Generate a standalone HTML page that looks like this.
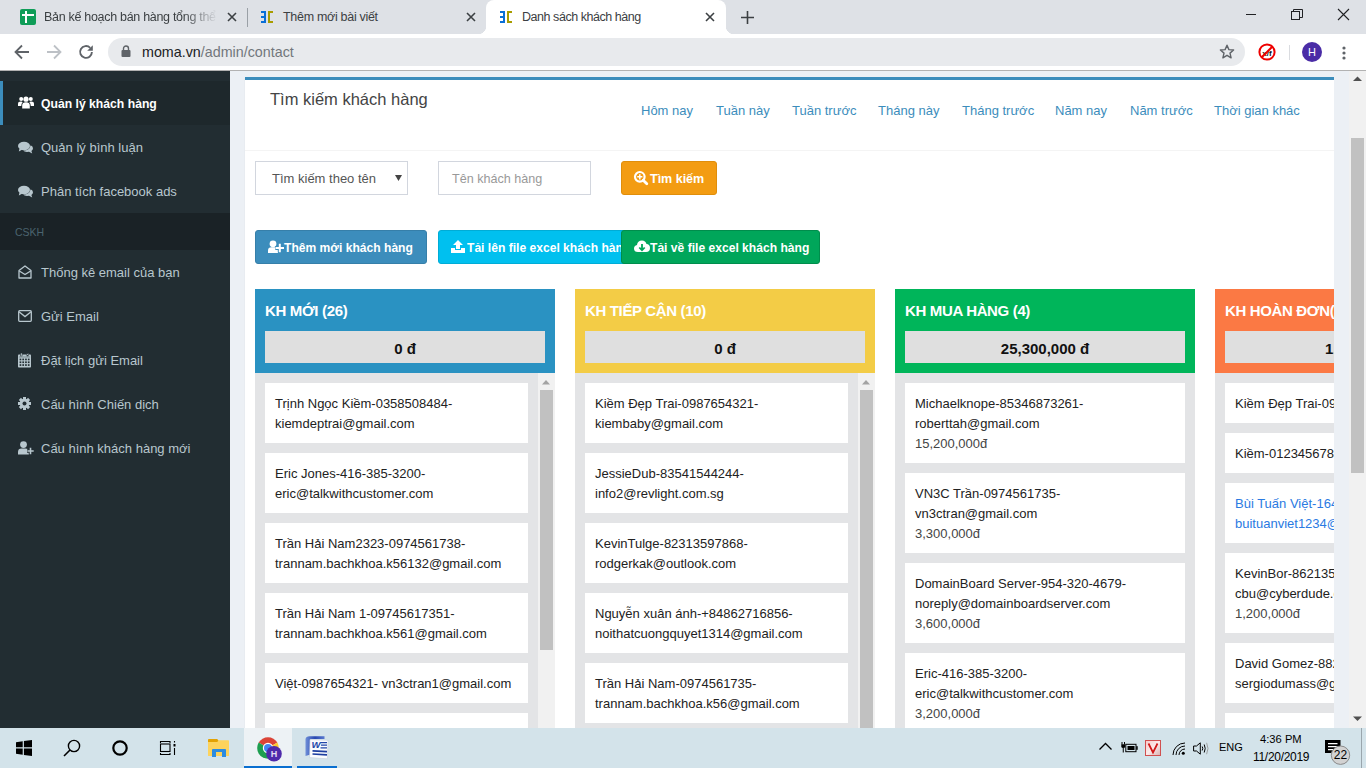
<!DOCTYPE html>
<html><head><meta charset="utf-8">
<style>
*{margin:0;padding:0;box-sizing:border-box}
html,body{width:1366px;height:768px;overflow:hidden;background:#ecf0f5;font-family:"Liberation Sans",sans-serif;position:relative}
.a{position:absolute;white-space:nowrap}
svg{position:absolute;overflow:visible}
/* chrome */
#tabs{left:0;top:0;width:1366px;height:34px;background:#dee1e6}
#toolbar{left:0;top:34px;width:1366px;height:36px;background:#fff}
#tline{left:0;top:70px;width:1366px;height:1px;background:#b2b2b2}
.tabt{font-size:12px;color:#3c4043;top:10px}
#omni{left:108px;top:38px;width:1137px;height:28px;border-radius:14px;background:#e8eaed}
/* sidebar */
#side{left:0;top:71px;width:230px;height:657px;background:#222d32}
.si{left:0;width:230px;height:44px}
.st{left:41px;font-size:13px;color:#b8c7ce;top:15px}
/* taskbar */
.lk{top:103px;font-size:13px;color:#3c8dbc}
.kt{top:13px;font-size:15px;letter-spacing:-0.35px;font-weight:bold;color:#fff}
.ktot{top:42px;width:280px;height:32px;background:#dfdfdf;text-align:center;font-size:15px;font-weight:bold;color:#111;line-height:35px}
.card{background:#fff;overflow:hidden}
.cl{left:10px;font-size:13px;color:#222;line-height:20px}
.pr{color:#444}
.bl{color:#2a7ae2}
#task{left:0;top:728px;width:1366px;height:40px;background:#d3e3ea}
</style></head><body>
<!-- ===== TAB STRIP ===== -->
<div class="a" id="tabs"></div>
<!-- tab1 -->
<svg style="left:20px;top:9px" width="16" height="16" viewBox="0 0 16 16"><rect x="0" y="0" width="16" height="16" rx="2" fill="#0f9d58"/><rect x="2" y="5" width="12" height="2" fill="#fff"/><rect x="5" y="2" width="2" height="12" fill="#fff"/></svg>
<div class="a tabt" style="left:44px;top:10px;font-size:12.5px;letter-spacing:-0.3px;width:174px;overflow:hidden;-webkit-mask-image:linear-gradient(90deg,#000 80%,transparent)">Bản kế hoạch bán hàng tổng thể</div>
<svg style="left:227px;top:12px" width="10" height="10" viewBox="0 0 10 10"><path d="M1 1L9 9M9 1L1 9" stroke="#3c4043" stroke-width="1.6"/></svg>
<div class="a" style="left:247px;top:8px;width:1px;height:19px;background:#9aa0a6"></div>
<!-- tab2 -->
<svg style="left:260px;top:9px" width="14" height="15" viewBox="0 0 14 15"><path d="M1 3H5V13H1M1 8H4" stroke="#0a6fd6" stroke-width="2" fill="none"/><path d="M13 3H9V13H13" stroke="#a89c00" stroke-width="2" fill="none"/></svg>
<div class="a tabt" style="left:283px;top:10px;font-size:12.5px;letter-spacing:-0.3px">Thêm mới bài viết</div>
<svg style="left:466px;top:12px" width="10" height="10" viewBox="0 0 10 10"><path d="M1 1L9 9M9 1L1 9" stroke="#3c4043" stroke-width="1.6"/></svg>
<!-- active tab -->
<div class="a" style="left:486px;top:0;width:240px;height:35px;background:#fff;border-radius:8px 8px 0 0"></div>
<div class="a" style="left:478px;top:26px;width:8px;height:8px;background:radial-gradient(circle at 0 0,transparent 8px,#fff 8.5px)"></div>
<div class="a" style="left:726px;top:26px;width:8px;height:8px;background:radial-gradient(circle at 100% 0,transparent 8px,#fff 8.5px)"></div>
<svg style="left:499px;top:9px" width="14" height="15" viewBox="0 0 14 15"><path d="M1 3H5V13H1M1 8H4" stroke="#0a6fd6" stroke-width="2" fill="none"/><path d="M13 3H9V13H13" stroke="#a89c00" stroke-width="2" fill="none"/></svg>
<div class="a tabt" style="left:522px;top:10px;font-size:12.5px;letter-spacing:-0.45px">Danh sách khách hàng</div>
<svg style="left:705px;top:12px" width="10" height="10" viewBox="0 0 10 10"><path d="M1 1L9 9M9 1L1 9" stroke="#3c4043" stroke-width="1.6"/></svg>
<svg style="left:741px;top:11px" width="13" height="13" viewBox="0 0 13 13"><path d="M6.5 0V13M0 6.5H13" stroke="#3c4043" stroke-width="1.6"/></svg>
<!-- window controls -->
<svg style="left:1246px;top:14px" width="11" height="2" viewBox="0 0 11 2"><path d="M0 .5H10" stroke="#202124" stroke-width="1"/></svg>
<svg style="left:1291px;top:9px" width="12" height="11" viewBox="0 0 12 11"><rect x=".5" y="2.5" width="8" height="8" fill="none" stroke="#202124"/><path d="M2.5 2.5V.5H11.5V8.5H8.5" fill="none" stroke="#202124"/></svg>
<svg style="left:1338px;top:9px" width="11" height="11" viewBox="0 0 11 11"><path d="M0 0L11 11M11 0L0 11" stroke="#202124" stroke-width="1.1"/></svg>

<!-- ===== TOOLBAR ===== -->
<div class="a" id="toolbar"></div>
<div class="a" id="tline"></div>
<svg style="left:14px;top:44px" width="16" height="16" viewBox="0 0 16 16"><path d="M15 8H2M8 1.5L1.5 8L8 14.5" stroke="#5f6368" stroke-width="1.8" fill="none"/></svg>
<svg style="left:46px;top:44px" width="16" height="16" viewBox="0 0 16 16"><path d="M1 8H14M8 1.5L14.5 8L8 14.5" stroke="#bdc1c6" stroke-width="1.8" fill="none"/></svg>
<svg style="left:78px;top:44px" width="16" height="16" viewBox="0 0 16 16"><path d="M13.9 8A5.9 5.9 0 1 1 12.2 3.8" stroke="#5f6368" stroke-width="1.9" fill="none"/><path d="M14.8 1.2V6.8H9.2Z" fill="#5f6368"/></svg>
<div class="a" id="omni"></div>
<svg style="left:121px;top:45px" width="10" height="12" viewBox="0 0 10 12"><path d="M2.5 5V3.5A2.5 2.5 0 0 1 7.5 3.5V5" stroke="#5f6368" stroke-width="1.4" fill="none"/><rect x="0.5" y="5" width="9" height="7" rx="1" fill="#5f6368"/></svg>
<div class="a" style="left:142px;top:44px;font-size:14.3px;color:#202124">moma.vn<span style="color:#72777c">/admin/contact</span></div>
<svg style="left:1219px;top:44px" width="16" height="16" viewBox="0 0 16 16"><path d="M8 1.2L9.9 5.6L14.6 6L11 9.1L12.1 13.8L8 11.3L3.9 13.8L5 9.1L1.4 6L6.1 5.6Z" stroke="#5f6368" stroke-width="1.4" fill="none" stroke-linejoin="round"/></svg>
<svg style="left:1258px;top:43px" width="18" height="18" viewBox="0 0 18 18"><circle cx="9" cy="9" r="7.6" stroke="#e00" stroke-width="2" fill="#fff"/><text x="9" y="12.5" font-size="8" font-family="Liberation Sans" font-weight="bold" text-anchor="middle" fill="#111">x/f</text><path d="M3.8 14.2L14.2 3.8" stroke="#e00" stroke-width="2"/></svg>
<div class="a" style="left:1289px;top:45px;width:1px;height:15px;background:#dadce0"></div>
<svg style="left:1302px;top:42px" width="20" height="20" viewBox="0 0 20 20"><circle cx="10" cy="10" r="10" fill="#4a2ca6"/><text x="10" y="14.2" font-size="11" font-family="Liberation Sans" text-anchor="middle" fill="#fff">H</text></svg>
<svg style="left:1342px;top:46px" width="4" height="14" viewBox="0 0 4 14"><circle cx="2" cy="2" r="1.6" fill="#5f6368"/><circle cx="2" cy="7" r="1.6" fill="#5f6368"/><circle cx="2" cy="12" r="1.6" fill="#5f6368"/></svg>

<!-- ===== SIDEBAR ===== -->
<div class="a" id="side"></div>
<div class="a" style="left:0;top:81px;width:230px;height:44px;background:#1e282c"></div>
<div class="a" style="left:0;top:81px;width:3px;height:44px;background:#3c8dbc"></div>
<div class="a" style="left:0;top:213px;width:230px;height:37px;background:#1a2226"></div>
<div class="a" style="left:15px;top:226px;font-size:10.5px;color:#4b646f">CSKH</div>
<!-- icons -->
<svg style="left:18px;top:96px" width="16" height="13" viewBox="0 0 16 13"><circle cx="8" cy="3.2" r="2.6" fill="#fff"/><circle cx="3.2" cy="3" r="2" fill="#fff"/><circle cx="12.8" cy="3" r="2" fill="#fff"/><path d="M4.2 12.5V9.5Q4.2 6.3 8 6.3Q11.8 6.3 11.8 9.5V12.5Z" fill="#fff"/><path d="M0 10V8Q0 5.6 3 5.6Q4.2 5.6 4.6 6.2Q3.3 7.5 3.3 9.5V10Z" fill="#fff"/><path d="M16 10V8Q16 5.6 13 5.6Q11.8 5.6 11.4 6.2Q12.7 7.5 12.7 9.5V10Z" fill="#fff"/></svg>
<svg style="left:18px;top:141px" width="15" height="13" viewBox="0 0 15 13"><ellipse cx="6" cy="5" rx="6" ry="4.2" fill="#b8c7ce"/><path d="M1.5 7.5L0.8 10.5L4.5 8.5Z" fill="#b8c7ce"/><path d="M12.6 4.2Q15 5.4 15 7.3Q15 8.9 13.4 9.9L14.2 12.4L11 10.8Q6.5 11.4 5.2 9.6Q11.6 9.6 12.6 4.2Z" fill="#b8c7ce"/></svg>
<svg style="left:18px;top:185px" width="15" height="13" viewBox="0 0 15 13"><ellipse cx="6" cy="5" rx="6" ry="4.2" fill="#b8c7ce"/><path d="M1.5 7.5L0.8 10.5L4.5 8.5Z" fill="#b8c7ce"/><path d="M12.6 4.2Q15 5.4 15 7.3Q15 8.9 13.4 9.9L14.2 12.4L11 10.8Q6.5 11.4 5.2 9.6Q11.6 9.6 12.6 4.2Z" fill="#b8c7ce"/></svg>
<svg style="left:18px;top:265px" width="14" height="14" viewBox="0 0 14 14"><path d="M1 5.5L7 1L13 5.5V13H1Z" fill="none" stroke="#b8c7ce" stroke-width="1.3" stroke-linejoin="round"/><path d="M1.3 6L7 9.6L12.7 6" fill="none" stroke="#b8c7ce" stroke-width="1.3"/></svg>
<svg style="left:18px;top:310px" width="14" height="12" viewBox="0 0 14 12"><rect x=".7" y=".7" width="12.6" height="10.6" rx="1" fill="none" stroke="#b8c7ce" stroke-width="1.3"/><path d="M1 1.8L7 6.6L13 1.8" fill="none" stroke="#b8c7ce" stroke-width="1.3"/></svg>
<svg style="left:18px;top:353px" width="13" height="15" viewBox="0 0 13 15"><rect x="0" y="1.5" width="13" height="13" rx=".8" fill="#b8c7ce"/><rect x="0.9" y="3.6" width="11.2" height="0.8" fill="#222d32" opacity=".5"/><rect x="1.60" y="5.60" width="1.7" height="1.7" fill="#222d32"/><rect x="4.35" y="5.60" width="1.7" height="1.7" fill="#222d32"/><rect x="7.10" y="5.60" width="1.7" height="1.7" fill="#222d32"/><rect x="9.85" y="5.60" width="1.7" height="1.7" fill="#222d32"/><rect x="1.60" y="8.40" width="1.7" height="1.7" fill="#222d32"/><rect x="4.35" y="8.40" width="1.7" height="1.7" fill="#222d32"/><rect x="7.10" y="8.40" width="1.7" height="1.7" fill="#222d32"/><rect x="9.85" y="8.40" width="1.7" height="1.7" fill="#222d32"/><rect x="1.60" y="11.20" width="1.7" height="1.7" fill="#222d32"/><rect x="4.35" y="11.20" width="1.7" height="1.7" fill="#222d32"/><rect x="7.10" y="11.20" width="1.7" height="1.7" fill="#222d32"/><rect x="9.85" y="11.20" width="1.7" height="1.7" fill="#222d32"/><rect x="2.6" y="0" width="1.5" height="3" fill="#b8c7ce" stroke="#222d32" stroke-width=".5"/><rect x="8.9" y="0" width="1.5" height="3" fill="#b8c7ce" stroke="#222d32" stroke-width=".5"/></svg>
<svg style="left:18px;top:397px" width="13" height="13" viewBox="0 0 13 13"><g fill="#b8c7ce" transform="translate(6.5 6.5)"><rect x="-1.5" y="-6.5" width="3" height="13"/><rect x="-1.5" y="-6.5" width="3" height="13" transform="rotate(45)"/><rect x="-1.5" y="-6.5" width="3" height="13" transform="rotate(90)"/><rect x="-1.5" y="-6.5" width="3" height="13" transform="rotate(135)"/><circle r="4.8"/></g><circle cx="6.5" cy="6.5" r="2" fill="#222d32"/></svg>
<svg style="left:18px;top:441px" width="17" height="14" viewBox="0 0 17 14"><circle cx="5.5" cy="3.6" r="3.4" fill="#b8c7ce"/><path d="M0 13.5V11Q0 7.6 3.5 7.6H7.5Q10.5 7.6 11 10V13.5Z" fill="#b8c7ce"/><path d="M12.5 6.5V13.5M9 10H16" stroke="#222d32" stroke-width="3.6"/><path d="M12.5 6.8V13.2M9.3 10H15.7" stroke="#b8c7ce" stroke-width="1.6"/></svg>
<!-- text -->
<div class="a" style="left:41px;top:97px;font-size:12.2px;font-weight:bold;color:#fff">Quản lý khách hàng</div>
<div class="a" style="left:41px;top:140px;font-size:13px;color:#b8c7ce">Quản lý bình luận</div>
<div class="a" style="left:41px;top:184px;font-size:13px;color:#b8c7ce">Phân tích facebook ads</div>
<div class="a" style="left:41px;top:265px;font-size:13px;color:#b8c7ce">Thống kê email của bạn</div>
<div class="a" style="left:41px;top:309px;font-size:13px;color:#b8c7ce">Gửi Email</div>
<div class="a" style="left:41px;top:353px;font-size:13px;color:#b8c7ce">Đặt lịch gửi Email</div>
<div class="a" style="left:41px;top:397px;font-size:13px;color:#b8c7ce">Cấu hình Chiến dịch</div>
<div class="a" style="left:41px;top:441px;font-size:13px;color:#b8c7ce">Cấu hình khách hàng mới</div>


<!-- ===== MAIN ===== -->
<!-- box -->
<div class="a" style="left:245px;top:77px;width:1089px;height:700px;background:#fff;border-top:3px solid #3c8dbc;box-shadow:0 1px 1px rgba(0,0,0,.1)"></div>
<div class="a" style="left:270px;top:90px;font-size:16.5px;color:#444">Tìm kiếm khách hàng</div>
<div class="a" style="left:245px;top:150px;width:1089px;height:1px;background:#f4f4f4"></div>
<div class="a lk" style="left:641px">Hôm nay</div>
<div class="a lk" style="left:716px">Tuần này</div>
<div class="a lk" style="left:792px">Tuần trước</div>
<div class="a lk" style="left:878px">Tháng này</div>
<div class="a lk" style="left:962px">Tháng trước</div>
<div class="a lk" style="left:1055px">Năm nay</div>
<div class="a lk" style="left:1130px">Năm trước</div>
<div class="a lk" style="left:1214px">Thời gian khác</div>
<!-- filter row -->
<div class="a" style="left:255px;top:161px;width:153px;height:34px;border:1px solid #d2d6de;background:#fff"></div>
<div class="a" style="left:272px;top:171px;font-size:13px;color:#555">Tìm kiếm theo tên</div>
<svg style="left:395px;top:175px" width="7" height="6" viewBox="0 0 7 6"><path d="M0 0H7L3.5 6Z" fill="#444"/></svg>
<div class="a" style="left:438px;top:161px;width:153px;height:34px;border:1px solid #d2d6de;background:#fff"></div>
<div class="a" style="left:452px;top:172px;font-size:12.6px;color:#999">Tên khách hàng</div>
<div class="a" style="left:621px;top:161px;width:96px;height:34px;background:#f39c12;border:1px solid #e08e0b;border-radius:3px"></div>
<svg style="left:634px;top:171px" width="14" height="14" viewBox="0 0 14 14"><circle cx="5.8" cy="5.8" r="4.8" fill="none" stroke="#fff" stroke-width="2.2"/><path d="M9.2 9.2L12.8 12.8" stroke="#fff" stroke-width="2.8" stroke-linecap="round"/><path d="M5.8 3.2V8.4M3.2 5.8H8.4" stroke="#fff" stroke-width="1.5"/></svg>
<div class="a" style="left:650px;top:172px;font-size:12.5px;font-weight:bold;color:#fff">Tìm kiếm</div>
<!-- action buttons -->
<div class="a" style="left:255px;top:230px;width:172px;height:34px;background:#3c8dbc;border:1px solid #367fa9;border-radius:3px"></div>
<svg style="left:268px;top:240px" width="17" height="14" viewBox="0 0 17 14"><circle cx="5" cy="3.8" r="3.4" fill="#fff"/><path d="M0 13V10.5Q0 7.2 3.5 7.2H6.5Q10 7.2 10 10.5V13Z" fill="#fff"/><path d="M11.8 3.5V12.5M7.3 8H16.3" stroke="#3c8dbc" stroke-width="4"/><path d="M11.8 3.8V12.2M7.6 8H16" stroke="#fff" stroke-width="2"/></svg>
<div class="a" style="left:284px;top:241px;font-size:12.1px;font-weight:bold;color:#fff">Thêm mới khách hàng</div>
<div class="a" style="left:438px;top:230px;width:220px;height:34px;background:#00c0ef;border:1px solid #00acd6;border-radius:3px;overflow:hidden"></div>
<svg style="left:451px;top:240px" width="14" height="13" viewBox="0 0 14 13"><path d="M7 0L12 5H9V9H5V5H2Z" fill="#fff"/><path d="M0 8H4V10H10V8H14V13H0Z" fill="#fff"/></svg>
<div class="a" style="left:467px;top:241px;width:154px;overflow:hidden;font-size:12.1px;font-weight:bold;color:#fff">Tải lên file excel khách hàng</div>
<div class="a" style="left:621px;top:230px;width:199px;height:34px;background:#00a65a;border:1px solid #008d4c;border-radius:3px"></div>
<svg style="left:634px;top:240px" width="16" height="13" viewBox="0 0 16 13"><path d="M4 12Q0 12 0 8.5Q0 5.5 3 5Q3.5 0.5 8 0.5Q11.5 0.5 12.5 4Q16 4.3 16 8Q16 12 12 12Z" fill="#fff"/><path d="M8 4V10M5.3 7.5L8 10.3L10.7 7.5" stroke="#00a65a" stroke-width="1.8" fill="none"/></svg>
<div class="a" style="left:650px;top:241px;font-size:12.1px;font-weight:bold;color:#fff">Tải về file excel khách hàng</div>
<div class="a" style="left:245px;top:289px;width:1089px;height:439px;overflow:hidden">
<div class="a" style="left:10px;top:0;width:300px;height:84px;background:#2a92c2"></div>
<div class="a kt" style="left:20px">KH MỚI (26)</div>
<div class="a ktot" style="left:20px">0 đ</div>
<div class="a" style="left:10px;top:84px;width:300px;height:400px;background:#e3e4e6"></div>
<div class="a card" style="left:20px;top:94px;width:263px;height:60px">
<div class="a cl" style="top:11px">Trịnh Ngọc Kiềm-0358508484-</div>
<div class="a cl" style="top:31px">kiemdeptrai@gmail.com</div>
</div>
<div class="a card" style="left:20px;top:164px;width:263px;height:60px">
<div class="a cl" style="top:11px">Eric Jones-416-385-3200-</div>
<div class="a cl" style="top:31px">eric@talkwithcustomer.com</div>
</div>
<div class="a card" style="left:20px;top:234px;width:263px;height:60px">
<div class="a cl" style="top:11px">Trần Hải Nam2323-0974561738-</div>
<div class="a cl" style="top:31px">trannam.bachkhoa.k56132@gmail.com</div>
</div>
<div class="a card" style="left:20px;top:304px;width:263px;height:60px">
<div class="a cl" style="top:11px">Trần Hải Nam 1-09745617351-</div>
<div class="a cl" style="top:31px">trannam.bachkhoa.k561@gmail.com</div>
</div>
<div class="a card" style="left:20px;top:374px;width:263px;height:40px">
<div class="a cl" style="top:11px">Việt-0987654321- vn3ctran1@gmail.com</div>
</div>
<div class="a card" style="left:20px;top:424px;width:263px;height:60px">
<div class="a cl" style="top:11px">Vũ Đức-0912345678-</div>
<div class="a cl" style="top:31px">vuduc@gmail.com</div>
</div>
<div class="a" style="left:293px;top:84px;width:17px;height:400px;background:#f1f1f1"></div>
<div class="a" style="left:295px;top:101px;width:13px;height:260px;background:#c1c1c1"></div>
<svg style="left:297px;top:91px" width="8" height="5" viewBox="0 0 8 5"><path d="M0 4.5H8L4 0Z" fill="#a3a3a3"/></svg>
<div class="a" style="left:330px;top:0;width:300px;height:84px;background:#f3cc46"></div>
<div class="a kt" style="left:340px">KH TIẾP CẬN (10)</div>
<div class="a ktot" style="left:340px">0 đ</div>
<div class="a" style="left:330px;top:84px;width:300px;height:400px;background:#e3e4e6"></div>
<div class="a card" style="left:340px;top:94px;width:263px;height:60px">
<div class="a cl" style="top:11px">Kiềm Đẹp Trai-0987654321-</div>
<div class="a cl" style="top:31px">kiembaby@gmail.com</div>
</div>
<div class="a card" style="left:340px;top:164px;width:263px;height:60px">
<div class="a cl" style="top:11px">JessieDub-83541544244-</div>
<div class="a cl" style="top:31px">info2@revlight.com.sg</div>
</div>
<div class="a card" style="left:340px;top:234px;width:263px;height:60px">
<div class="a cl" style="top:11px">KevinTulge-82313597868-</div>
<div class="a cl" style="top:31px">rodgerkak@outlook.com</div>
</div>
<div class="a card" style="left:340px;top:304px;width:263px;height:60px">
<div class="a cl" style="top:11px">Nguyễn xuân ánh-+84862716856-</div>
<div class="a cl" style="top:31px">noithatcuongquyet1314@gmail.com</div>
</div>
<div class="a card" style="left:340px;top:374px;width:263px;height:60px">
<div class="a cl" style="top:11px">Trần Hải Nam-0974561735-</div>
<div class="a cl" style="top:31px">trannam.bachkhoa.k56@gmail.com</div>
</div>
<div class="a" style="left:613px;top:84px;width:17px;height:400px;background:#f1f1f1"></div>
<div class="a" style="left:615px;top:101px;width:13px;height:370px;background:#c1c1c1"></div>
<svg style="left:617px;top:91px" width="8" height="5" viewBox="0 0 8 5"><path d="M0 4.5H8L4 0Z" fill="#a3a3a3"/></svg>
<div class="a" style="left:650px;top:0;width:300px;height:84px;background:#00b55a"></div>
<div class="a kt" style="left:660px">KH MUA HÀNG (4)</div>
<div class="a ktot" style="left:660px">25,300,000 đ</div>
<div class="a" style="left:650px;top:84px;width:300px;height:400px;background:#e3e4e6"></div>
<div class="a card" style="left:660px;top:94px;width:280px;height:80px">
<div class="a cl" style="top:11px">Michaelknope-85346873261-</div>
<div class="a cl" style="top:31px">roberttah@gmail.com</div>
<div class="a cl pr" style="top:51px">15,200,000đ</div>
</div>
<div class="a card" style="left:660px;top:184px;width:280px;height:80px">
<div class="a cl" style="top:11px">VN3C Trần-0974561735-</div>
<div class="a cl" style="top:31px">vn3ctran@gmail.com</div>
<div class="a cl pr" style="top:51px">3,300,000đ</div>
</div>
<div class="a card" style="left:660px;top:274px;width:280px;height:80px">
<div class="a cl" style="top:11px">DomainBoard Server-954-320-4679-</div>
<div class="a cl" style="top:31px">noreply@domainboardserver.com</div>
<div class="a cl pr" style="top:51px">3,600,000đ</div>
</div>
<div class="a card" style="left:660px;top:364px;width:280px;height:80px">
<div class="a cl" style="top:11px">Eric-416-385-3200-</div>
<div class="a cl" style="top:31px">eric@talkwithcustomer.com</div>
<div class="a cl pr" style="top:51px">3,200,000đ</div>
</div>
<div class="a" style="left:970px;top:0;width:300px;height:84px;background:#fb7944"></div>
<div class="a kt" style="left:980px">KH HOÀN ĐƠN(1)</div>
<div class="a ktot" style="left:980px">1,200,000 đ</div>
<div class="a" style="left:970px;top:84px;width:300px;height:400px;background:#e3e4e6"></div>
<div class="a card" style="left:980px;top:94px;width:290px;height:40px">
<div class="a cl" style="top:11px">Kiềm Đẹp Trai-0987654321-kiembaby@gmail.com</div>
</div>
<div class="a card" style="left:980px;top:144px;width:290px;height:40px">
<div class="a cl" style="top:11px">Kiềm-012345678-kiem@gmail.com</div>
</div>
<div class="a card" style="left:980px;top:194px;width:290px;height:60px">
<div class="a cl bl" style="top:11px">Bùi Tuấn Việt-1643765432-</div>
<div class="a cl bl" style="top:31px">buituanviet1234@gmail.com</div>
</div>
<div class="a card" style="left:980px;top:264px;width:290px;height:80px">
<div class="a cl" style="top:11px">KevinBor-86213597868-</div>
<div class="a cl" style="top:31px">cbu@cyberdude.com</div>
<div class="a cl pr" style="top:51px">1,200,000đ</div>
</div>
<div class="a card" style="left:980px;top:354px;width:290px;height:60px">
<div class="a cl" style="top:11px">David Gomez-88213597868-</div>
<div class="a cl" style="top:31px">sergiodumass@gmail.com</div>
</div>
<div class="a card" style="left:980px;top:424px;width:290px;height:60px">
<div class="a cl" style="top:11px">Trần-0974561735-</div>
<div class="a cl" style="top:31px">tran@gmail.com</div>
</div>
</div>
<!-- right region -->
<div class="a" style="left:1334px;top:71px;width:15px;height:657px;background:#ecf0f5"></div>
<div class="a" style="left:1349px;top:71px;width:17px;height:657px;background:#f1f1f1"></div>
<div class="a" style="left:1351px;top:138px;width:13px;height:335px;background:#c1c1c1"></div>
<svg style="left:1353px;top:76px" width="9" height="6" viewBox="0 0 9 6"><path d="M0 5H9L4.5 0.5Z" fill="#505050"/></svg>
<svg style="left:1353px;top:716px" width="9" height="6" viewBox="0 0 9 6"><path d="M0 0.5H9L4.5 5Z" fill="#505050"/></svg>


<!-- ===== TASKBAR ===== -->
<div class="a" id="task"></div>
<div class="a" style="left:244px;top:728px;width:48px;height:40px;background:#edf2f5"></div>
<div class="a" style="left:244px;top:766px;width:48px;height:2px;background:#0a6fd0"></div>
<div class="a" style="left:297px;top:766px;width:40px;height:2px;background:#0a6fd0"></div>
<!-- windows logo -->
<svg style="left:16px;top:740px" width="16" height="16" viewBox="0 0 16 16"><path d="M0 2.2L6.7 1.3V7.2H0ZM7.9 1.1L16 0V7.2H7.9ZM0 8.6H6.7V14.7L0 13.8ZM7.9 8.6H16V16L7.9 14.9Z" fill="#000"/></svg>
<!-- search -->
<svg style="left:63px;top:739px" width="18" height="18" viewBox="0 0 18 18"><circle cx="11" cy="7" r="5.6" fill="none" stroke="#000" stroke-width="1.4"/><path d="M7 11L1 17" stroke="#000" stroke-width="1.6"/></svg>
<!-- cortana -->
<svg style="left:112px;top:740px" width="16" height="16" viewBox="0 0 16 16"><circle cx="8" cy="8" r="6.7" fill="none" stroke="#000" stroke-width="2.2"/></svg>
<!-- task view -->
<svg style="left:159px;top:739px" width="18" height="18" viewBox="0 0 18 18"><path d="M1.5 4V2.5H11V4M1.5 14V15.5H11V14" fill="none" stroke="#000" stroke-width="1.1"/><rect x="1.5" y="5" width="9.5" height="7.5" fill="none" stroke="#000" stroke-width="1.1"/><rect x="14.5" y="5" width="2" height="2.5" fill="#000"/><path d="M15.5 2V3.5M15.5 9V16" stroke="#000" stroke-width="1.1"/></svg>
<!-- explorer -->
<svg style="left:208px;top:738px" width="22" height="20" viewBox="0 0 22 20"><rect x="0" y="2.3" width="21" height="15.7" rx=".6" fill="#fdd35c"/><path d="M0 1.8Q0 1 1 1H9.3L10.3 2.5L9.3 4H0Z" fill="#e3a203"/><path d="M4 19V11.8Q4 10.9 5 10.9H17Q18 10.9 18 11.8V19H14V14H8V19Z" fill="#2d8ce0"/></svg>
<!-- chrome -->
<svg style="left:257px;top:737px" width="30" height="26" viewBox="0 0 30 26"><path d="M11 11L1.65 5.6A10.8 10.8 0 0 1 20.35 5.6Z" fill="#db4437"/><path d="M11 11L20.35 5.6A10.8 10.8 0 0 1 11 21.8Z" fill="#fcc934"/><path d="M11 11L11 21.8A10.8 10.8 0 0 1 1.65 5.6Z" fill="#1e9e50"/><circle cx="11" cy="11" r="5.2" fill="#fff"/><circle cx="11" cy="11" r="4" fill="#4285f4"/><circle cx="17" cy="16.8" r="7.8" fill="#4e2aab"/><text x="17" y="20" font-size="9" font-weight="bold" font-family="Liberation Sans" text-anchor="middle" fill="#e4dcf4">H</text></svg>
<!-- word -->
<svg style="left:304px;top:735px" width="26" height="25" viewBox="0 0 26 25"><defs><linearGradient id="wg" x1="0" x2="1" y1="0" y2="0"><stop offset="0" stop-color="#6f8fd8"/><stop offset=".5" stop-color="#2848b0"/><stop offset="1" stop-color="#5a7ad0"/></linearGradient></defs><path d="M1.5 4Q2 1.2 5.5 1.2H20.5V4H6.5V19.5L1.5 21Z" fill="url(#wg)"/><path d="M6 4.5L24 5.3L23.4 23.8L5.6 22.6Z" fill="#fbfcfe" stroke="#c4ccdc" stroke-width=".6"/><text x="7.6" y="13.2" font-size="9.5" font-weight="bold" font-style="italic" font-family="Liberation Sans" fill="#2346a8">W</text><path d="M16.5 7.6H23M17 10.2H23M16.5 12.8H23" stroke="#2346a8" stroke-width="1.3"/><path d="M8.5 15.8L23 16.6M8.5 19L23 19.8" stroke="#1d3ea0" stroke-width="1.7"/></svg>
<!-- tray -->
<svg style="left:1099px;top:742px" width="13" height="8" viewBox="0 0 13 8"><path d="M0.5 7.5L6.5 1.5L12.5 7.5" fill="none" stroke="#000" stroke-width="1.3"/></svg>
<svg style="left:1121px;top:741px" width="17" height="13" viewBox="0 0 17 13"><path d="M1 1V3.5M3.5 1V3.5" stroke="#000" stroke-width="1"/><path d="M0.3 3.3H4.2V5.5Q4.2 7 2.25 7Q0.3 7 0.3 5.5Z" fill="#000"/><path d="M2.25 7V11.5" stroke="#000" stroke-width="1"/><rect x="4.8" y="3.3" width="10.2" height="7.4" fill="none" stroke="#000" stroke-width="1"/><rect x="6.5" y="5" width="7" height="4" fill="#000"/><rect x="15.2" y="5.2" width="1.5" height="3.6" fill="#000"/></svg>
<svg style="left:1145px;top:740px" width="16" height="16" viewBox="0 0 16 16"><defs><linearGradient id="vg" x1="0" y1="0" x2="1" y2="1"><stop offset="0" stop-color="#f8c8c8"/><stop offset=".5" stop-color="#fbeaea"/><stop offset="1" stop-color="#d8b0b0"/></linearGradient></defs><rect x=".5" y=".5" width="15" height="15" fill="url(#vg)" stroke="#d05050" stroke-width="1"/><path d="M3.5 3.5L8 12.5L12.5 3.5" fill="none" stroke="#d01818" stroke-width="1.7"/></svg>
<svg style="left:1172px;top:742px" width="14" height="14" viewBox="0 0 14 14"><path d="M1 13A12 12 0 0 1 13 1M4 13A9 9 0 0 1 13 4M7 13A6 6 0 0 1 13 7" fill="none" stroke="#000" stroke-width="1"/><circle cx="11.3" cy="11.3" r="1.5" fill="#000"/></svg>
<svg style="left:1193px;top:742px" width="16" height="13" viewBox="0 0 16 13"><path d="M0.6 4H3.5L7.3 0.8V12.2L3.5 9H0.6Z" fill="none" stroke="#000" stroke-width="1"/><path d="M9.2 4.5Q10.3 6.5 9.2 8.5M11.2 2.5Q13.2 6.5 11.2 10.5" fill="none" stroke="#000" stroke-width="1"/><path d="M13.6 0.8Q16.4 6.5 13.6 12.2" fill="none" stroke="#999" stroke-width=".9"/></svg>
<div class="a" style="left:1219px;top:741px;font-size:11px;color:#000">ENG</div>
<div class="a" style="left:1260px;top:733px;font-size:11.2px;color:#000">4:36 PM</div>
<div class="a" style="left:1253px;top:750px;font-size:12px;letter-spacing:-0.3px;color:#000">11/20/2019</div>
<svg style="left:1325px;top:739px" width="28" height="27" viewBox="0 0 28 27"><rect x="0" y="1" width="15.5" height="13" fill="#000"/><path d="M3 4.6H12.5M3 7.6H12.5M3 10.6H10" stroke="#fff" stroke-width="1.3"/><circle cx="15.5" cy="16.2" r="9.2" fill="#d2d2d2" stroke="#8a8a8a" stroke-width="1"/><text x="15.5" y="20.4" font-size="12" font-family="Liberation Sans" text-anchor="middle" fill="#000">22</text></svg>
<div class="a" style="left:1361px;top:728px;width:1px;height:40px;background:#9aa6ad"></div>

</body></html>
